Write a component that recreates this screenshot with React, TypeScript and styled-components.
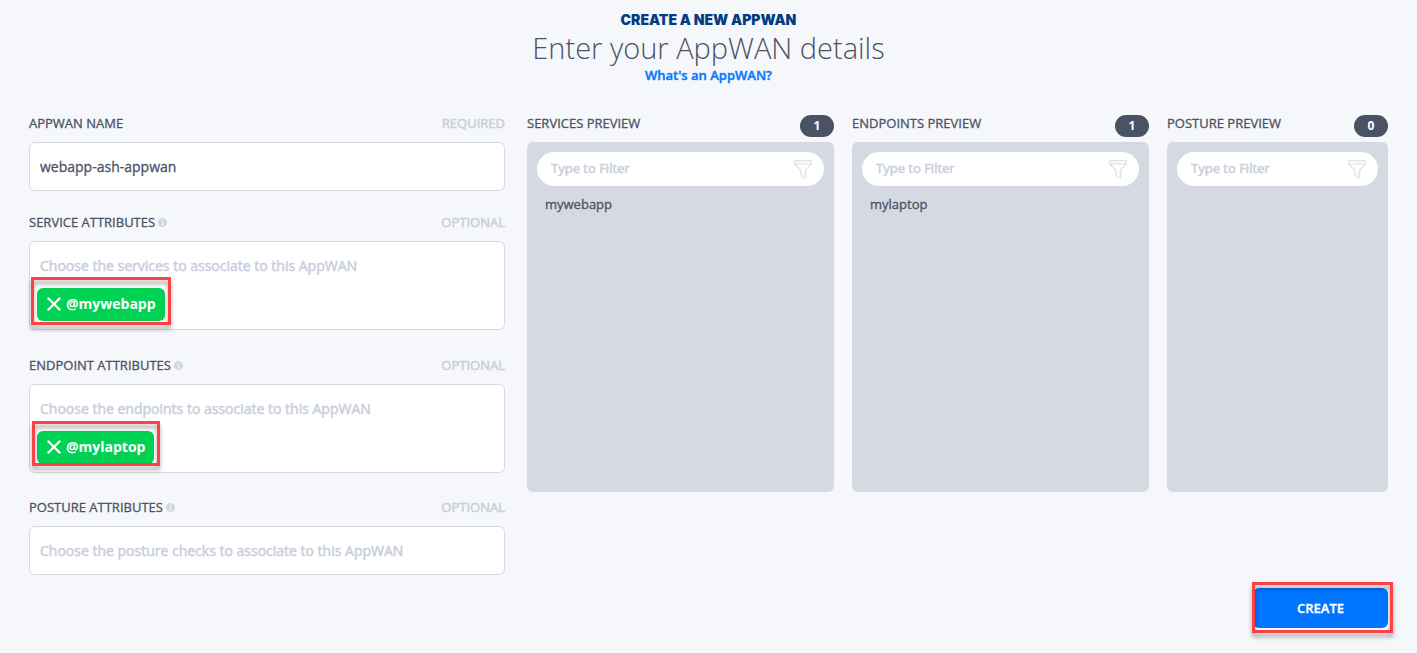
import React from "react";
import styled, { createGlobalStyle } from "styled-components";

const ink = "#4a5364";
const muted = "#c9cfdb";
const line = "#d5d9e2";

const GlobalStyle = createGlobalStyle`
  *, *::before, *::after { box-sizing: border-box; }
  body {
    margin: 0;
    background: #f6f7fb;
    color: ${ink};
    font-family: "Open Sans", "Noto Sans", sans-serif;
    font-size: 13px;
    line-height: 18px;
  }
  input, button { font-family: inherit; }
  label, h2, li, input { -webkit-text-stroke: 0.3px; }
`;

const Page = styled.main`
  padding: 10px 29px 20px;
`;

const Header = styled.header`
  display: flex;
  flex-direction: column;
  align-items: center;
  margin-bottom: 30px;
`;

const Eyebrow = styled.p`
  margin: 0;
  font-family: Inter, sans-serif;
  font-size: 14px;
  line-height: 19px;
  font-weight: 900;
  color: #043c81;
`;

const Title = styled.h1`
  margin: 0;
  font-size: 29px;
  line-height: 37px;
  font-weight: 300;
`;

const HelpLink = styled.a`
  color: #0a78ff;
  font-weight: 600;
  -webkit-text-stroke: 0.4px;
  text-decoration: none;
`;

const Columns = styled.div`
  display: grid;
  grid-template-columns: 476fr 861fr;
  gap: 22px;
  align-items: start;
`;

const Fields = styled.div`
  display: flex;
  flex-direction: column;
`;

const Field = styled.div<{ $gap?: number }>`
  margin-bottom: ${(p) => p.$gap ?? 0}px;
`;

const FieldHead = styled.div`
  display: flex;
  justify-content: space-between;
  margin-bottom: 10px;
`;

const Label = styled.label`
  display: flex;
  align-items: center;
  gap: 3px;
  font-weight: 500;
`;

const Hint = styled.span`
  color: ${muted};
  font-weight: 500;
  -webkit-text-stroke: 0.5px;
`;

const FieldBox = styled.div`
  border: 1px solid ${line};
  border-radius: 6px;
  background: #fff;
  padding: 0 7px;
`;

const TextInput = styled.input<{ $tagged?: boolean }>`
  display: block;
  width: 100%;
  height: ${(p) => (p.$tagged ? 46 : 47)}px;
  padding: 0 3px;
  border: 0;
  outline: 0;
  background: transparent;
  color: ${ink};
  font-size: 14px;
  font-weight: 500;
  &::placeholder {
    color: ${muted};
    opacity: 1;
    -webkit-text-stroke: 0.5px;
  }
`;

const TagRow = styled.div`
  display: flex;
  padding-bottom: 8px;
`;

const Marked = styled.div`
  position: relative;
`;

const Mark = styled.span<{ $inset: string }>`
  position: absolute;
  inset: ${(p) => p.$inset};
  border: 3px solid #fb4346;
  filter: drop-shadow(0 4px 2px rgba(0, 0, 0, 0.35));
  pointer-events: none;
`;

const Tag = styled.button`
  display: flex;
  align-items: center;
  gap: 5px;
  height: 33px;
  padding: 0 9px 2px 10px;
  border: 0;
  border-radius: 6px;
  background: #00d253;
  color: #fff;
  font-size: 14px;
  font-weight: 700;
`;

const Previews = styled.div`
  display: grid;
  grid-template-columns: minmax(0, 307fr) minmax(0, 297fr) minmax(0, 221fr);
  gap: 18px;
`;

const PreviewHead = styled.div`
  display: flex;
  justify-content: space-between;
  height: 28px;
`;

const PreviewTitle = styled.h2`
  margin: 0;
  font-size: 13px;
  font-weight: 500;
`;

const Count = styled.span`
  height: 22px;
  width: 34px;
  margin-top: 1px;
  border-radius: 11px;
  background: ${ink};
  color: #fff;
  font-size: 12px;
  line-height: 22px;
  font-weight: 700;
  text-align: center;
`;

const Panel = styled.div`
  min-height: 350px;
  padding: 10px;
  border-radius: 6px;
  background: ${line};
`;

const FilterBox = styled.label`
  display: flex;
  align-items: center;
  height: 34px;
  padding: 0 12px 0 14px;
  border-radius: 17px;
  background: #fff;
`;

const FilterInput = styled.input`
  flex: 1;
  min-width: 0;
  height: 32px;
  padding: 0 0 2px;
  border: 0;
  outline: 0;
  background: transparent;
  color: ${ink};
  font-size: 13px;
  font-weight: 500;
  &::placeholder {
    color: ${muted};
    opacity: 1;
    -webkit-text-stroke: 0.5px;
  }
`;

const List = styled.ul`
  margin: 9px 0 0;
  padding: 0 8px;
  list-style: none;
  font-weight: 500;
`;

const Footer = styled.footer`
  display: flex;
  justify-content: flex-end;
  margin-top: 13px;
`;

const CreateButton = styled.button`
  display: block;
  width: 135px;
  height: 40px;
  border: 0;
  border-radius: 6px;
  background: #0075ff;
  color: #fff;
  font-size: 13px;
  font-weight: 600;
  -webkit-text-stroke: 0.3px;
`;

const InfoIcon = () => (
  <svg width="9" height="9" viewBox="0 0 9 9" aria-hidden="true">
    <circle cx="4.5" cy="4.5" r="4.5" fill="#d0d6e0" />
    <path d="M4.5 1.7v1.2M3.7 4h.9v2.9M3.5 7h2.1" stroke="#f6f7fb" strokeWidth="1" fill="none" />
  </svg>
);

const CrossIcon = () => (
  <svg width="14" height="14" viewBox="0 0 14 14" aria-hidden="true">
    <path d="M1.5 1.5l11 11M12.5 1.5l-11 11" stroke="#fff" strokeWidth="2.4" strokeLinecap="round" />
  </svg>
);

const FunnelIcon = () => (
  <svg width="18" height="19" viewBox="0 0 18 19" fill="none" stroke="#e3e2ed" aria-hidden="true">
    <path d="M1.2.7h15.6q.7 0 .7.8v1.4q0 .8-.6 1.5L11.6 10v7.4q0 1-.9.6l-3.3-2.3q-.5-.4-.5-1V10L1.1 4.4Q.5 3.7.5 2.9V1.5Q.5.7 1.2.7Z" strokeWidth="1.4" />
    <path d="M.8 3.8h16.4" strokeWidth="1.4" />
    <path d="M9.6 12h2M9.6 14.5h2" strokeWidth="1" />
  </svg>
);

type AttributeProps = {
  id: string;
  label: string;
  placeholder: string;
  gap?: number;
  tag?: string;
  mark?: string;
};

const AttributeField = ({ id, label, placeholder, gap, tag, mark }: AttributeProps) => (
  <Field $gap={gap}>
    <FieldHead>
      <Label htmlFor={id}>
        {label}
        <InfoIcon />
      </Label>
      <Hint>OPTIONAL</Hint>
    </FieldHead>
    <FieldBox>
      <TextInput id={id} type="text" placeholder={placeholder} $tagged={Boolean(tag)} />
      {tag && (
        <TagRow>
          <Marked>
            <Tag type="button">
              <CrossIcon />
              {tag}
            </Tag>
            {mark && <Mark $inset={mark} />}
          </Marked>
        </TagRow>
      )}
    </FieldBox>
  </Field>
);

const Preview = ({ title, items }: { title: string; items: string[] }) => (
  <section>
    <PreviewHead>
      <PreviewTitle>{title}</PreviewTitle>
      <Count>{items.length}</Count>
    </PreviewHead>
    <Panel>
      <FilterBox>
        <FilterInput type="text" placeholder="Type to Filter" aria-label={`Filter ${title}`} />
        <FunnelIcon />
      </FilterBox>
      <List>
        {items.map((item) => (
          <li key={item}>{item}</li>
        ))}
      </List>
    </Panel>
  </section>
);

export default function App() {
  return (
    <>
      <GlobalStyle />
      <Page>
        <Header>
          <Eyebrow>CREATE A NEW APPWAN</Eyebrow>
          <Title>Enter your AppWAN details</Title>
          <HelpLink href="#help">What's an AppWAN?</HelpLink>
        </Header>
        <Columns>
          <Fields>
            <Field $gap={22}>
              <FieldHead>
                <Label htmlFor="name">APPWAN NAME</Label>
                <Hint>REQUIRED</Hint>
              </FieldHead>
              <FieldBox>
                <TextInput id="name" type="text" defaultValue="webapp-ash-appwan" />
              </FieldBox>
            </Field>
            <AttributeField
              id="services"
              label="SERVICE ATTRIBUTES"
              placeholder="Choose the services to associate to this AppWAN"
              tag="@mywebapp"
              mark="-11px -6px -4px -6px"
              gap={26}
            />
            <AttributeField
              id="endpoints"
              label="ENDPOINT ATTRIBUTES"
              placeholder="Choose the endpoints to associate to this AppWAN"
              tag="@mylaptop"
              mark="-10px -6px -2px -5px"
              gap={25}
            />
            <AttributeField
              id="posture"
              label="POSTURE ATTRIBUTES"
              placeholder="Choose the posture checks to associate to this AppWAN"
            />
          </Fields>
          <Previews>
            <Preview title="SERVICES PREVIEW" items={["mywebapp"]} />
            <Preview title="ENDPOINTS PREVIEW" items={["mylaptop"]} />
            <Preview title="POSTURE PREVIEW" items={[]} />
          </Previews>
        </Columns>
        <Footer>
          <Marked>
            <CreateButton type="submit">CREATE</CreateButton>
            <Mark $inset="-6px -5px -5px -1px" />
          </Marked>
        </Footer>
      </Page>
    </>
  );
}
